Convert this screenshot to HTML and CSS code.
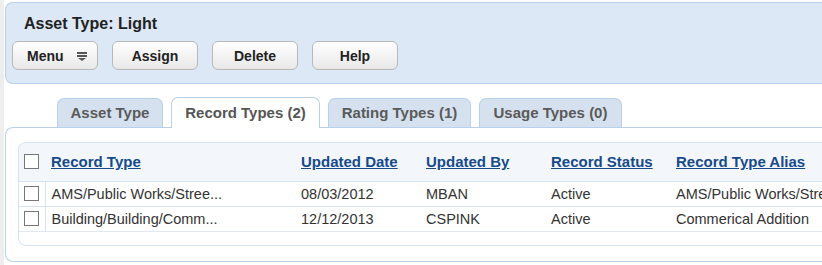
FILE: index.html
```html
<!DOCTYPE html>
<html lang="en">
<head>
    <meta charset="UTF-8">
    <title>Asset Type: Light</title>
    <link rel="stylesheet" href="styles.css">
</head>
<body>
    <div class="page">
        <div class="header">
            <h1>Asset Type: Light</h1>
            <div class="toolbar">
                <button class="btn btn-menu">Menu
                    <svg class="menu-icon" width="10" height="9" viewBox="0 0 10 9">
                        <rect x="0" y="0" width="10" height="2" fill="#555"/>
                        <rect x="0" y="3" width="10" height="2" fill="#555"/>
                        <polygon points="1,6 9,6 5,9" fill="#555"/>
                    </svg>
                </button>
                <button class="btn">Assign</button>
                <button class="btn">Delete</button>
                <button class="btn">Help</button>
            </div>
        </div>

        <div class="tabs">
            <div class="tab tab-asset">Asset Type</div>
            <div class="tab tab-record selected">Record Types (2)</div>
            <div class="tab tab-rating">Rating Types (1)</div>
            <div class="tab tab-usage">Usage Types (0)</div>
        </div>

        <div class="content">
            <div class="grid">
                <table>
                    <colgroup>
                        <col class="col-check">
                        <col class="col-wide">
                        <col class="col-mid">
                        <col class="col-mid">
                        <col class="col-mid">
                        <col class="col-wide">
                    </colgroup>
                    <thead>
                        <tr>
                            <th class="check"><span class="checkbox"></span></th>
                            <th><a href="#">Record Type</a></th>
                            <th><a href="#">Updated Date</a></th>
                            <th><a href="#">Updated By</a></th>
                            <th><a href="#">Record Status</a></th>
                            <th><a href="#">Record Type Alias</a></th>
                        </tr>
                    </thead>
                    <tbody>
                        <tr>
                            <td class="check"><span class="checkbox"></span></td>
                            <td>AMS/Public Works/Stree...</td>
                            <td>08/03/2012</td>
                            <td>MBAN</td>
                            <td>Active</td>
                            <td>AMS/Public Works/Street Light</td>
                        </tr>
                        <tr>
                            <td class="check"><span class="checkbox"></span></td>
                            <td>Building/Building/Comm...</td>
                            <td>12/12/2013</td>
                            <td>CSPINK</td>
                            <td>Active</td>
                            <td>Commerical Addition</td>
                        </tr>
                    </tbody>
                </table>
                <div class="grid-footer"></div>
            </div>
        </div>
    </div>
</body>
</html>
```

FILE: styles.css
```css
body {
    font-family: "Liberation Sans", Arial, sans-serif;
    background-color: #ffffff;
    margin: 0;
    padding: 0;
    overflow: hidden;
}

.page {
    border-left: 4px solid #eeeeee;
    padding-left: 1px;
    padding-top: 2px;
    min-height: 265px;
    box-sizing: border-box;
}

/* header panel */
.header {
    background-color: #dce8f6;
    border: 1px solid #b9d0ea;
    border-right: none;
    border-radius: 8px 0 0 8px;
    margin-right: -20px;
    padding: 12px 0 12px 6px;
    height: 56px;
}

h1 {
    font-size: 16px;
    line-height: 18px;
    font-weight: bold;
    color: #222222;
    margin: 0;
    padding-left: 12px;
}

.toolbar {
    display: flex;
    gap: 14px;
    margin-top: 8px;
}

.btn {
    width: 86px;
    height: 29px;
    border: 1px solid #b8b8b8;
    border-radius: 6px;
    background: linear-gradient(#ffffff, #e8e8e8);
    font-family: "Liberation Sans", Arial, sans-serif;
    font-size: 14px;
    font-weight: bold;
    color: #222222;
    padding: 0;
}

.btn-menu {
    display: flex;
    align-items: center;
    padding-left: 14px;
    gap: 13px;
}

.menu-icon {
    margin-top: 1px;
}

/* tabs */
.tabs {
    display: flex;
    gap: 8px;
    margin-top: 13px;
    margin-left: 52px;
    height: 30px;
    align-items: flex-end;
    position: relative;
    z-index: 1;
}

.tab {
    height: 29px;
    box-sizing: border-box;
    background-color: #d5e1ee;
    border: 1px solid #b9d0ea;
    border-bottom: none;
    border-radius: 7px 7px 0 0;
    font-size: 15px;
    font-weight: bold;
    color: #5a5a5a;
    text-align: center;
    line-height: 28px;
}

.tab.selected {
    background-color: #ffffff;
    height: 31px;
    margin-bottom: -1px;
    line-height: 29px;
    color: #555555;
}

.tab-asset { width: 106px; }
.tab-record { width: 149px; }
.tab-rating { width: 143px; }
.tab-usage { width: 143px; }

/* content panel */
.content {
    border: 1px solid #b9d0ea;
    border-right: none;
    border-radius: 8px 0 0 8px;
    margin-right: -20px;
    padding: 14px 0 15px 12px;
}

.grid {
    border: 1px solid #d7e3f0;
    border-right: none;
    border-radius: 8px 0 0 8px;
    overflow: hidden;
}

table {
    border-collapse: collapse;
    table-layout: fixed;
    width: 900px;
}

.col-check { width: 26px; }
.col-wide { width: 250px; }
.col-mid { width: 125px; }

thead tr {
    background-color: #f3f7fc;
    height: 38px;
}

th {
    text-align: left;
    padding: 0 0 0 6px;
    font-size: 15px;
    font-weight: bold;
    vertical-align: middle;
}

th a {
    color: #164a8a;
    text-decoration: underline;
}

tbody tr {
    height: 25px;
    border-top: 1px solid #d7e3f0;
}

tbody tr:last-child {
    border-bottom: 1px solid #e3e8ee;
}

td {
    padding: 0 0 0 6px;
    font-size: 14.5px;
    color: #333333;
    white-space: nowrap;
    overflow: hidden;
    vertical-align: middle;
}

.check {
    padding: 0 0 0 5px;
}

tbody td.check {
    border-right: 1px solid #d7e3f0;
}

.checkbox {
    display: block;
    width: 13px;
    height: 13px;
    border: 1px solid #777777;
    background-color: #ffffff;
}

.grid-footer {
    height: 13px;
}
```
